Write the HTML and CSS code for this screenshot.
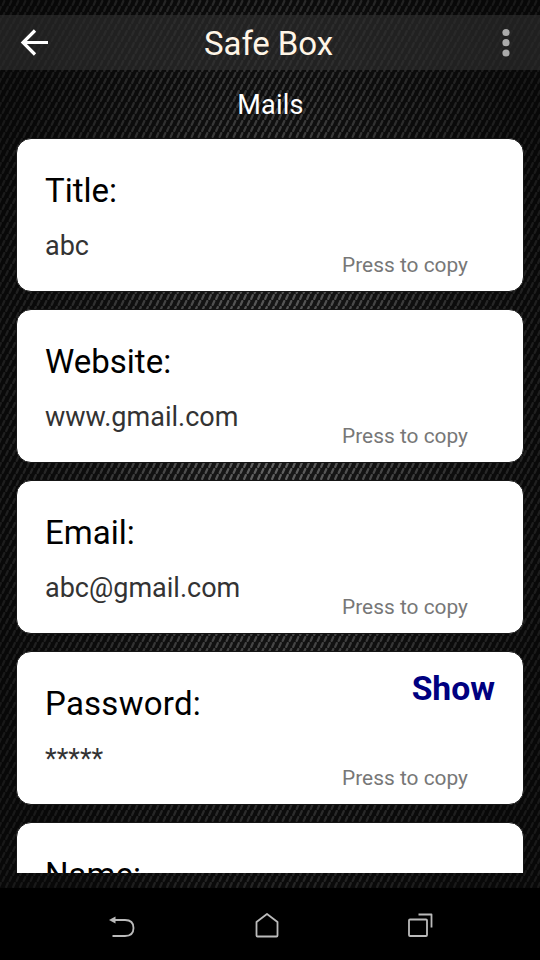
FILE: index.html
```html
<!DOCTYPE html>
<html lang="en">
<head>
<meta charset="utf-8">
<title>Safe Box</title>
<link rel="stylesheet" href="styles.css">
</head>
<body>
<div class="screen">
  <svg class="weave" width="540" height="888" aria-hidden="true">
    <defs>
      <pattern id="twill" width="7" height="12" patternUnits="userSpaceOnUse">
        <rect width="7" height="12" fill="#2c2c2c"/>
        <path d="M2.700 4.900L4.300 1.100M6.200 10.900L7.800 7.100M-.8 10.900L.8 7.100" stroke="#fff" stroke-width="2.300" stroke-linecap="round" opacity=".72"/>
      </pattern>
      <radialGradient id="glow" gradientUnits="userSpaceOnUse" cx="0" cy="0" r="1" gradientTransform="translate(270 420) scale(300 600)">
        <stop offset="0" stop-color="#888"/>
        <stop offset=".3" stop-color="#646464"/>
        <stop offset=".65" stop-color="#3a3a3a"/>
        <stop offset="1" stop-color="#202020"/>
      </radialGradient>
      <mask id="threads"><rect width="540" height="888" fill="url(#twill)"/></mask>
    </defs>
    <rect width="540" height="888" fill="url(#glow)" mask="url(#threads)"/>
  </svg>
  <header class="bar">
    <svg class="back" width="30" height="30" viewBox="0 0 30 30"><path d="M16 2.5L4 14.5L16 26.5M4 14.5H29" /></svg>
    <h1>Safe Box</h1>
    <svg class="more" width="10" height="30" viewBox="0 0 10 30"><circle cx="5" cy="4.5" r="3.6"/><circle cx="5" cy="14.7" r="3.6"/><circle cx="5" cy="25" r="3.6"/></svg>
  </header>
  <h2>Mails</h2>
  <main class="list">
    <section class="card"><h3>Title:</h3><p>abc</p><span class="copy">Press to copy</span></section>
    <section class="card"><h3>Website:</h3><p>www.gmail.com</p><span class="copy">Press to copy</span></section>
    <section class="card"><h3>Email:</h3><p>abc@gmail.com</p><span class="copy">Press to copy</span></section>
    <section class="card"><h3 class="wide">Password:</h3><p>*****</p><span class="show">Show</span><span class="copy">Press to copy</span></section>
    <section class="card"><h3>Name:</h3></section>
  </main>
  <nav class="nav">
    <svg width="30" height="30" viewBox="0 0 30 30"><path d="M7 10H19Q27.500 10 27.500 18T19 26H6.500"/><path class="tip" d="M3 10L9.500 6.500V13.500Z"/></svg>
    <svg width="30" height="30" viewBox="0 0 30 30"><path d="M4.500 25.500V12L15 4L25.500 12V25.500Q25.500 26.500 24.500 26.500H5.500Q4.500 26.500 4.500 25.500Z"/></svg>
    <svg width="30" height="30" viewBox="0 0 30 30"><rect x="3" y="9.500" width="18" height="16.500" rx="1"/><path d="M12.500 4.500H25.500V17.500"/></svg>
  </nav>
</div>
</body>
</html>
```
FILE: styles.css
```css
* { box-sizing: border-box; }
body { margin: 0; background: #000; font-family: Roboto, sans-serif; }
h1, h2, h3, p { margin: 0; font-weight: 400; }
svg { display: block; fill: none; }

.screen {
  position: relative;
  isolation: isolate;
  width: 540px;
  height: 960px;
  padding-top: 15px;
  display: flex;
  flex-direction: column;
  overflow: hidden;
  background: #030303;
}
.weave { position: absolute; inset: 0; z-index: -1; }

.bar {
  height: 55px;
  flex: none;
  padding: 0 29px 0 19px;
  display: grid;
  grid-template-columns: 30px 1fr 10px;
  align-items: center;
  background: rgba(46, 46, 46, .65);
}
.bar h1 { font-size: 33px; letter-spacing: -.1px; line-height: 55px; text-align: center; padding: 1px 13px 0 0; color: #fff5e6; }
.back path { stroke: #fff; stroke-width: 3.200; }
.more { fill: #aaa; }

h2 { flex: none; height: 68px; font-size: 27px; letter-spacing: .2px; line-height: 71px; text-align: center; color: #fff; padding-left: 1px; }

.list {
  height: 735px;
  flex: none;
  padding: 0 16px;
  display: flex;
  flex-direction: column;
  gap: 17px;
  overflow: hidden;
}
.card {
  height: 154px;
  flex: none;
  padding: 31px 55px 0 28px;
  display: grid;
  grid-template-columns: 1fr auto;
  grid-template-rows: 42px 1fr;
  border: 1px solid #151515;
  border-radius: 15px;
  background: #fff;
}
.card h3 { font-size: 33px; line-height: 41px; color: #000; }
.card .wide { letter-spacing: .25px; }
.card p { grid-row: 2; grid-column: 1; padding-top: 16px; font-size: 27px; line-height: 36px; color: #333; }
.copy { grid-row: 2; grid-column: 2; padding-top: 39px; font-size: 20.900px; line-height: 28px; color: #777; }
.show {
  grid-row: 1;
  grid-column: 2;
  justify-self: end;
  margin: -14px -27px 0 0;
  font-size: 33.700px;
  line-height: 40px;
  font-weight: 700;
  color: #000080;
}

.nav {
  height: 72px;
  flex: none;
  margin-top: auto;
  padding: 22px 0 0 106px;
  display: grid;
  grid-template-columns: 146px 154px 30px;
  align-items: start;
  background: #000;
}
.nav svg { stroke: #bbb; stroke-width: 1.800; stroke-linejoin: round; }
.nav .tip { fill: #bbb; stroke: none; }
```
